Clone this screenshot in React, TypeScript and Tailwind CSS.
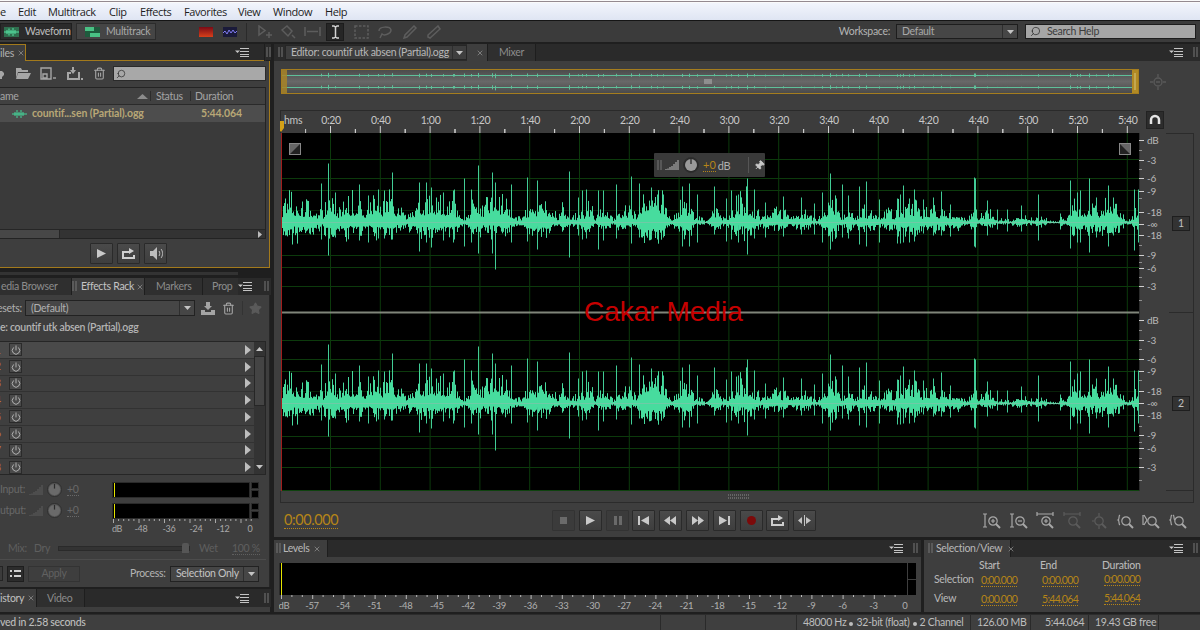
import React from "react";
import { Power, Search, Star, Trash2, Pin, X } from "lucide-react";

// envelope of the clip: [x on page, height of the solid part]
const ENV: number[][] = [[282,18],[290,24],[300,20],[312,18],[318,8],[322,12],[328,22],[340,14],[345,20],[352,20],[356,14],[360,18],[365,12],[372,20],[385,18],[390,22],[400,14],[407,6],[408,16],[415,14],[420,24],[430,22],[445,16],[455,20],[460,8],[463,4],[470,14],[480,20],[490,18],[500,20],[510,14],[517,5],[522,6],[526,14],[535,15],[545,18],[555,10],[558,4],[562,12],[572,5],[580,10],[590,14],[595,6],[600,14],[608,12],[613,4],[620,10],[628,14],[635,6],[640,20],[650,27],[660,25],[668,14],[672,4],[678,12],[682,18],[690,18],[695,4],[700,6],[705,2],[710,8],[716,18],[722,6],[728,8],[735,16],[745,22],[752,18],[760,5],[765,8],[775,10],[785,12],[790,6],[795,8],[802,8],[808,10],[815,3],[825,12],[832,22],[838,12],[842,5],[848,13],[856,6],[862,12],[872,12],[878,6],[885,10],[892,8],[900,16],[908,18],[916,15],[925,10],[935,12],[942,14],[948,5],[952,12],[958,10],[962,5],[968,3],[972,15],[978,4],[985,10],[990,8],[995,4],[1000,3],[1005,3],[1010,2],[1018,8],[1024,8],[1028,3],[1038,4],[1042,6],[1048,2],[1058,1],[1061,8],[1065,2],[1070,14],[1080,18],[1090,14],[1100,14],[1110,18],[1118,14],[1124,4],[1130,2],[1135,10],[1139,8]];

// tall single peaks: [x, up, down]
const PEAKS: number[][] = [[321,39,17],[328,59,33],[335,30,15],[359,38,18],[368,27,20],[378,33,16],[384,32,16],[392,50,17],[419,40,29],[426,40,20],[431,35,25],[443,30,18],[453,32,20],[454,33,17],[464,44,24],[471,33,20],[478,57,31],[492,50,31],[495,40,47],[511,38,20],[527,45,19],[537,42,27],[569,51,35],[578,25,13],[582,32,17],[586,33,16],[598,32,27],[603,32,18],[616,38,16],[631,46,21],[639,39,15],[651,35,17],[657,28,17],[663,28,15],[682,36,24],[689,39,24],[697,28,20],[714,36,12],[726,24,19],[731,32,17],[738,28,20],[747,44,32],[754,33,16],[765,20,15],[783,26,14],[801,25,12],[814,19,12],[822,30,20],[830,49,27],[836,24,15],[842,38,15],[848,27,16],[859,36,22],[866,41,24],[879,23,20],[897,24,21],[900,28,21],[903,37,20],[909,24,20],[914,33,19],[923,23,11],[933,25,13],[941,31,13],[950,18,14],[974,45,24],[975,44,25],[987,22,13],[997,13,7],[1007,13,9],[1021,17,9],[1038,28,18],[1060,9,7],[1070,42,26],[1077,30,20],[1080,32,20],[1089,44,30],[1096,25,15],[1108,37,24],[1113,25,13],[1134,33,28],[1138,33,20]];

function envAt(x: number) {
  for (let i = 0; i < ENV.length - 1; i++) {
    const [a, va] = ENV[i];
    const [b, vb] = ENV[i + 1];
    if (x >= a && x <= b) return va + ((vb - va) * (x - a)) / (b - a);
  }
  return 0;
}

function buildColumns() {
  let seed = 7331;
  const rnd = () => {
    seed = (seed * 16807) % 2147483647;
    return seed / 2147483647;
  };
  const jag = () => {
    const r = rnd();
    if (r < 0.3) return 0.4 + 0.2 * rnd();
    if (r < 0.68) return 0.65 + 0.35 * rnd();
    return 1.1 + 0.6 * rnd();
  };
  const out: number[][] = [];
  for (let x = 282; x < 1139; x++) {
    const slow = 0.8 + 0.2 * Math.sin(x * 0.9 + Math.sin(x * 0.23) * 3);
    const e = envAt(x) * slow * 1.05;
    out.push([x, e * jag(), e * 0.6 * jag()]);
  }
  return out;
}

const COLS = buildColumns();

function Clip({ mid }: { mid: number }) {
  const core = COLS.map(([x, u, d]) => `M${x + 0.5} ${(mid - u).toFixed(1)}V${(mid + d).toFixed(1)}`).join("");
  const peaks = PEAKS.map(([x, u, d]) => `M${x + 0.5} ${mid - u}V${mid + d}`).join("");
  return (
    <g>
      <path d={peaks} stroke="#41cc96" strokeWidth="1" />
      <path d={core} stroke="#47dc9e" strokeWidth="1" />
      <path d={`M282 ${mid}H1139`} stroke="#6fcaa6" strokeWidth="1" />
    </g>
  );
}

function MiniClip({ mid }: { mid: number }) {
  const p = PEAKS.map(([x, u, dn]) => `M${x + 0.5} ${mid - u * 0.045}V${mid + dn * 0.06}`).join("");
  return <path d={`M282 ${mid}H1132` + p} stroke="#5fc09a" strokeWidth="1" />;
}

const HLINES = [159, 178, 190, 210, 234, 255, 267, 286, 340, 359, 371, 391, 415, 436, 448, 467];
const VLINES = Array.from({ length: 17 }, (_, i) => 330.5 + i * 49.8);
const RULER = ["0:20","0:40","1:00","1:20","1:40","2:00","2:20","2:40","3:00","3:20","3:40","4:00","4:20","4:40","5:00","5:20","5:40"];
const DB_SCALE: [string, number][] = [["dB",140],["-3",160],["-6",178],["-9",191],["-18",212],["-∞",224],["-18",235],["-9",255],["-6",268],["-3",286],["dB",320],["-3",340],["-6",359],["-9",371],["-18",391],["-∞",403],["-18",415],["-9",435],["-6",448],["-3",467]];
const LEVELS = ["-57","-54","-51","-48","-45","-42","-39","-36","-33","-30","-27","-24","-21","-18","-15","-12","-9","-6","-3","0"];

function Grip() {
  return (
    <svg width="5" height="11" viewBox="0 0 5 11" className="shrink-0">
      <path d="M0 1h5M0 3h5M0 5h5M0 7h5M0 9h5" stroke="#777" strokeWidth="1" strokeDasharray="2 1" />
    </svg>
  );
}

function PanelMenu() {
  return (
    <svg width="14" height="9" viewBox="0 0 14 9" className="shrink-0">
      <path d="M0 2.500h5L2.500 5z" fill="#c8c8c8" />
      <path d="M5 .5h9M5 3.500h9M5 6.500h9M5 8.500h9" stroke="#c4c4c4" strokeWidth="1" />
    </svg>
  );
}

function TabClose({ className = "" }: { className?: string }) {
  return <X size={8} strokeWidth={2} className={`text-[#9a9a9a] shrink-0 ${className}`} />;
}

function TransportBtn({ children, dim }: { children: React.ReactNode; dim?: boolean }) {
  return (
    <div
      className={`w-[23px] h-[21px] flex items-center justify-center rounded-[1px] border ${
        dim ? "border-[#333] bg-[#3b3b3b]" : "border-[#2a2a2a] bg-gradient-to-b from-[#4a4a4a] to-[#3e3e3e]"
      }`}
    >
      {children}
    </div>
  );
}

function Glyph({ d, fill = "#c9c9c9" }: { d: string; fill?: string }) {
  return (
    <svg width="13" height="11" viewBox="0 0 13 11">
      <path d={d} fill={fill} />
    </svg>
  );
}

function LoopIcon({ color = "#cfcfcf" }: { color?: string }) {
  return (
    <svg width="15" height="13" viewBox="0 0 15 13">
      <path d="M1 4h7V1l5 3-5 3V6H3v4h9V8h2v4H1z" fill={color} />
    </svg>
  );
}

function ZoomIcon({ mark, dim }: { mark: React.ReactNode; dim?: boolean }) {
  const c = dim ? "#5c5c5c" : "#a8a8a8";
  return (
    <svg width="18" height="17" viewBox="0 0 18 17" fill="none" stroke={c} strokeWidth="1.200">
      {mark}
      <circle cx="10" cy="9" r="4.200" />
      <path d="M13 12l4 4" strokeWidth="2" />
    </svg>
  );
}

function Tab({ label, active, width, grip, offset = 0 }: { label: string; active?: boolean; width: number; grip?: boolean; offset?: number }) {
  return (
    <div
      style={{ width }}
      className={`h-full flex items-center gap-[3px] overflow-hidden shrink-0 border-r border-[#1e1e1e] ${
        active ? "bg-[#3e3e3e] text-[#c4c4c4]" : "bg-[#2f2f2f] text-[#8c8c8c]"
      }`}
    >
      {grip && <Grip />}
      <span style={{ marginLeft: offset }} className="whitespace-nowrap pl-[1px]">
        {label}
      </span>
      {active && <TabClose className="-ml-[1px]" />}
    </div>
  );
}

function Gold({ children, className = "" }: { children: React.ReactNode; className?: string }) {
  return <span className={`text-[#b58518] border-b border-dotted border-[#b58518] leading-[12px] tracking-[-0.7px] ${className}`}>{children}</span>;
}

function Bars({ color = "#5c5c5c" }: { color?: string }) {
  return (
    <svg width="14" height="12" viewBox="0 0 14 12">
      <path d="M1 11v-1M3 11V9.500M5 11V8M7 11V7M9 11V5M11 11V3M13 11V1" stroke={color} strokeWidth="1" />
    </svg>
  );
}

function Knob({ size = 15, light }: { size?: number; light?: boolean }) {
  return (
    <svg width={size} height={size} viewBox="0 0 16 16">
      <circle cx="8" cy="8" r="7.500" fill={light ? "#2a2a2a" : "#555"} stroke="#2e2e2e" />
      <circle cx="8" cy="8" r="6" fill={light ? "#9a9a9a" : "#6a6a6a"} />
      <path d="M8 2v5" stroke="#2a2a2a" strokeWidth="1.300" />
    </svg>
  );
}

function Menu() {
  const items = [["e", 0], ["Edit", 18], ["Multitrack", 48], ["Clip", 109], ["Effects", 140], ["Favorites", 184], ["View", 238], ["Window", 273], ["Help", 325]] as [string, number][];
  return (
    <div className="h-[17px] bg-gradient-to-b from-[#f2f5fc] to-[#dfe5f3] flex items-center font-['Open_Sans',sans-serif] text-[11px] tracking-[-0.4px] text-[#1d1d1d]">
      {items.map(([t, x], i) => (
        <span key={t} style={{ width: i < items.length - 1 ? items[i + 1][1] - x : undefined }} className="whitespace-nowrap">
          {t}
        </span>
      ))}
    </div>
  );
}

function ToolIcon({ d, w = 15, stroke = "#5d5d5d", dash }: { d: string; w?: number; stroke?: string; dash?: string }) {
  return (
    <svg width={w} height="14" viewBox={`0 0 ${w} 14`} fill="none" stroke={stroke} strokeWidth="1.500" strokeDasharray={dash}>
      <path d={d} />
    </svg>
  );
}

function Toolbar() {
  return (
    <div className="h-[22px] bg-[#3b3b3b] border-t border-[#151515] flex items-center">
      <div className="w-[72px] h-[17px] bg-[#2b2b2b] border border-[#1f1f1f] flex items-center pl-[3px] gap-[6px] text-[#bdbdbd]">
        <svg width="15" height="10" viewBox="0 0 15 10" className="shrink-0">
          <rect width="15" height="10" fill="#2f6f4f" />
          <path d="M0 5h15M3 3v4M5 1.500v7M7 3v4M9 1v8M11 3v4" stroke="#57e0a2" />
        </svg>
        Waveform
      </div>
      <div className="w-[80px] h-[17px] ml-[4px] bg-[#454545] border border-[#2c2c2c] flex items-center pl-[8px] gap-[6px] text-[#a8a8a8]">
        <svg width="15" height="10" viewBox="0 0 15 10" className="shrink-0">
          <rect width="15" height="10" fill="#1e5b3d" />
          <rect x="0" y="0" width="9" height="4" fill="#49c184" />
          <rect x="5" y="6" width="10" height="4" fill="#49c184" />
        </svg>
        Multitrack
      </div>
      <svg width="14" height="10" viewBox="0 0 14 10" className="ml-[43px]">
        <defs>
          <linearGradient id="sp" x1="0" y1="0" x2="0" y2="1">
            <stop offset="0" stopColor="#7a0a16" />
            <stop offset="1" stopColor="#d8401a" />
          </linearGradient>
        </defs>
        <rect width="14" height="10" fill="url(#sp)" />
      </svg>
      <svg width="14" height="10" viewBox="0 0 14 10" className="ml-[10px]">
        <rect width="14" height="10" fill="#1a1a3a" />
        <path d="M0 6l2-2 2 3 2-4 2 3 2-3 2 3 2-2" stroke="#7f7bf0" fill="none" />
      </svg>
      <div className="w-px h-[18px] bg-[#2a2a2a] ml-[9px]" />
      <div className="flex items-center ml-[11px] gap-[8px]">
        <ToolIcon d="M1 1v9l6-4.500zM11 7v6M8 10h6" />
        <ToolIcon d="M1 5l5-4 5 5-4 5zM11 10l3 3" />
        <ToolIcon w={17} d="M1 2v9M16 2v9M3 6.500h11" />
        <div className="w-[18px] h-[18px] -ml-[3px] bg-[#262626] border border-[#1c1c1c] flex items-center justify-center">
          <ToolIcon w={9} stroke="#d4d4d4" d="M1 1h2l1.500 1L6 1h2M4.500 2v10M1 13h2l1.500-1L6 13h2" />
        </div>
        <div className="ml-[2px]">
          <ToolIcon d="M1 1h13v12H1z" dash="2.500 1.500" />
        </div>
        <ToolIcon d="M2 6c0-5 11-5 12-1 0 4-7 6-9 4l-2 4" />
        <div className="ml-[3px]">
          <ToolIcon d="M1 13l3-1 9-9-2-2-9 9z" />
        </div>
        <ToolIcon w={16} d="M2 12l2 1 10-9-2-3-10 9zM2 12" />
      </div>
      <span className="ml-auto text-[#b4b4b4] mr-[6px]">Workspace:</span>
      <div className="w-[122px] h-[15px] bg-[#464646] border border-[#1d1d1d] flex items-center pl-[5px] text-[#a8a8a8]">
        <span className="flex-1">Default</span>
        <div className="w-[15px] h-full border-l border-[#2e2e2e] flex items-center justify-center">
          <svg width="7" height="4" viewBox="0 0 7 4">
            <path d="M0 0h7L3.500 4z" fill="#c4c4c4" />
          </svg>
        </div>
      </div>
      <div className="w-[171px] h-[15px] ml-[7px] mr-[4px] bg-[#a6a6a6] border border-[#1d1d1d] flex items-center pl-[4px] gap-[6px] text-[#3c3c3c]">
        <Search size={11} strokeWidth={1.500} className="-scale-x-100 text-[#222]" />
        Search Help
      </div>
    </div>
  );
}

function FilesPanel() {
  return (
    <div className="h-[224px] flex flex-col shrink-0">
      <div className="h-[17px] flex bg-[#2a2a2a] items-center">
        <div className="w-[26px] h-full bg-[#3e3e3e] border-t border-r border-[#a37a1c] flex items-center overflow-hidden text-[#b0b0b0]">
          <span className="whitespace-nowrap">iles</span>
          <TabClose className="ml-[3px]" />
        </div>
        <div className="flex-1 h-full border-b border-[#a37a1c] flex items-center justify-end pr-[15px]">
          <PanelMenu />
        </div>
        <div className="w-[2px] h-full border-l border-[#1e1e1e]" />
        <div className="h-full flex items-center border-b border-[#1e1e1e]">
          <Grip />
        </div>
      </div>
      <div className="flex-1 w-[270px] bg-[#3e3e3e] border-r border-b border-[#a37a1c] flex flex-col pr-[3px]">
        <div className="h-[24px] flex items-center pt-[1px] text-[#b0b0b0]">
          <svg width="4" height="10" viewBox="0 0 4 10" className="shrink-0">
            <path d="M0 2h2l2 2v2l-2 2v2H0z" fill="#a6a6a6" />
          </svg>
          <svg width="16" height="13" viewBox="0 0 16 13" className="ml-[11px]">
            <path d="M1 3V1h5l1 2h6v2H3L1 11zM3 6h13l-3 6H1z" fill="#a6a6a6" />
          </svg>
          <svg width="16" height="13" viewBox="0 0 16 13" fill="none" stroke="#a6a6a6" strokeWidth="1.400" className="ml-[9px]">
            <path d="M1 1h10v11H1zM3 7h4v4H3z" />
            <path d="M13 11h3" />
          </svg>
          <svg width="17" height="14" viewBox="0 0 17 14" className="ml-[10px]">
            <path d="M1 5h4v2H3v4h9V5h2v8H1zM6 0h2v3h2L7 7 4 3h2zM15 11h2v2h-2z" fill="#a6a6a6" />
          </svg>
          <Trash2 size={13} className="ml-[10px] text-[#a6a6a6]" />
          <div className="w-[153px] h-[15px] ml-[7px] bg-[#a8a8a8] border border-[#2a2a2a] flex items-center pl-[2px]">
            <Search size={10} strokeWidth={1.600} className="-scale-x-100 text-[#222]" />
          </div>
        </div>
        <div className="flex-1 mt-[2px] bg-[#3a3a3a] border border-l-0 border-[#232323] flex flex-col">
          <div className="h-[17px] bg-[#414141] border-b border-[#2a2a2a] flex items-center text-[#a4a4a4]">
            <span className="w-[137px]">ame</span>
            <svg width="11" height="5" viewBox="0 0 11 5">
              <path d="M5.500 0L11 5H0z" fill="#8c8c8c" />
            </svg>
            <span className="w-[37px] pl-[5px] ml-[2px] border-l border-[#2c2c2c]">Status</span>
            <span className="pl-[4px] ml-[3px] border-l border-[#2c2c2c]">Duration</span>
          </div>
          <div className="h-[17px] bg-[#4d4d4d] flex items-center pl-[12px] text-[#b8a776] font-bold tracking-[-0.1px]">
            <svg width="15" height="8" viewBox="0 0 15 8">
              <path d="M0 4h15M3 2v4M5 0v8M7 2v4M9 0v8M11 2v4" stroke="#45d59a" />
            </svg>
            <span className="ml-[5px] w-[169px]">countif...sen (Partial).ogg</span>
            <span>5:44.064</span>
          </div>
          <div className="flex-1" />
          <div className="h-[9px] flex bg-[#333] border-t border-[#262626]">
            <div className="w-[60px] bg-[#474747] border-r border-[#262626]" />
            <div className="flex-1 flex items-center justify-end pr-[3px]">
              <svg width="4" height="7" viewBox="0 0 4 7">
                <path d="M0 0l4 3.500L0 7z" fill="#bbb" />
              </svg>
            </div>
          </div>
        </div>
        <div className="h-[28px] flex items-center justify-center gap-[4px] pr-[3px] -ml-[6px]">
          <TransportBtn>
            <Glyph d="M2 1l9 4.500L2 10z" />
          </TransportBtn>
          <TransportBtn>
            <LoopIcon />
          </TransportBtn>
          <TransportBtn>
            <svg width="17" height="13" viewBox="0 0 17 13">
              <path d="M3 4h3l4-4v13l-4-4H3z" fill="#bdbdbd" />
              <path d="M12 4c1 1 1 4 0 5M14 2c2 2 2 7 0 9" stroke="#bdbdbd" fill="none" />
            </svg>
          </TransportBtn>
        </div>
      </div>
    </div>
  );
}

function RackRow({ n, first }: { n: number; first?: boolean }) {
  return (
    <div className={`h-[16.750px] flex items-center border-b border-[#323232] ${first ? "bg-[#4a4a4a]" : "bg-[#3f3f3f]"}`}>
      <span className="w-[9px] -ml-[5px] text-[#b8743a] overflow-hidden">{n}</span>
      <div className="ml-[5px] w-[13px] h-[13px] border border-[#2a2a2a] bg-[#4a4a4a] flex items-center justify-center">
        <Power size={10} strokeWidth={2} className="text-[#c4c4c4]" />
      </div>
      <div className="flex-1" />
      <svg width="7" height="10" viewBox="0 0 7 10" className="mr-[3px]">
        <path d="M1 0l6 5-6 5z" fill="#bdbdbd" />
      </svg>
    </div>
  );
}

function Meter() {
  return (
    <div className="flex h-[16px] w-[147px] gap-[1px] shrink-0">
      <div className="w-[138px] bg-black border border-[#2a2a2a] flex items-stretch pl-[1px]">
        <div className="w-[1px] bg-[#e4e400]" />
      </div>
      <div className="flex-1 flex flex-col gap-[1px]">
        <div className="flex-1 bg-black border border-[#2c2c2c]" />
        <div className="flex-1 bg-black border border-[#2c2c2c]" />
      </div>
    </div>
  );
}

function FxRow({ label }: { label: string }) {
  return (
    <div className="h-[21px] flex items-center text-[#686868]">
      <span className="w-[29px] whitespace-nowrap">{label}</span>
      <Bars />
      <div className="ml-[4px]">
        <Knob />
      </div>
      <span className="ml-[5px] w-[45px] border-b-0">
        <span className="border-b border-dotted border-[#686868]">+0</span>
      </span>
      <Meter />
    </div>
  );
}

function EffectsPanel() {
  return (
    <div className="h-[309px] flex flex-col shrink-0">
      <div className="h-[17px] flex bg-[#2a2a2a] items-center">
        <Tab label="edia Browser" width={72} />
        <Tab label="Effects Rack" width={73} active grip />
        <Tab label="Markers" width={58} offset={10} />
        <div className="w-[35px] h-full bg-[#2f2f2f] overflow-hidden text-[#8c8c8c] pl-[9px] flex items-center">Prop</div>
        <PanelMenu />
        <div className="flex-1 flex justify-end pr-[2px]">
          <Grip />
        </div>
      </div>
      <div className="flex-1 w-[270px] bg-[#3e3e3e] border-r border-[#262626] pr-[3px] flex flex-col">
        <div className="flex items-center h-[16px] mt-[5px] text-[#b0b0b0]">
          <span className="w-[25px] -ml-[3px] mr-[3px] whitespace-nowrap">esets:</span>
          <div className="w-[170px] h-[16px] bg-[#464646] border border-[#222] flex items-center pl-[5px]">
            <span className="flex-1">(Default)</span>
            <div className="w-[15px] border-l border-[#2e2e2e] h-full flex items-center justify-center">
              <svg width="7" height="4" viewBox="0 0 7 4">
                <path d="M0 0h7L3.500 4z" fill="#c4c4c4" />
              </svg>
            </div>
          </div>
          <svg width="14" height="13" viewBox="0 0 14 13" className="ml-[6px]">
            <path d="M0 8h4v2h6V8h4v5H0zM5 0h4v4h2L7 8 3 4h2z" fill="#a4a4a4" />
          </svg>
          <Trash2 size={13} className="ml-[7px] text-[#a4a4a4]" />
          <div className="w-px h-[14px] bg-[#333] ml-[7px]" />
          <Star size={13} className="ml-[6px] text-[#5a5a5a] fill-[#5a5a5a]" />
        </div>
        <div className="h-[14px] mt-[6px] text-[#b4b4b4] font-semibold whitespace-nowrap">e: countif utk absen (Partial).ogg</div>
        <div className="mt-[5px] flex border border-l-0 border-[#262626] h-[134px]">
          <div className="flex-1 overflow-hidden">
            {[1, 2, 3, 4, 5, 6, 7, 8].map((n) => (
              <RackRow key={n} n={n} first={n === 1} />
            ))}
          </div>
          <div className="w-[11px] bg-[#333] flex flex-col items-center">
            <div className="h-[14px] w-full flex items-center justify-center">
              <svg width="7" height="4" viewBox="0 0 7 4">
                <path d="M0 4h7L3.500 0z" fill="#c4c4c4" />
              </svg>
            </div>
            <div className="h-[50px] w-full bg-[#444] border border-[#262626]" />
            <div className="flex-1" />
            <div className="h-[14px] w-full flex items-center justify-center">
              <svg width="7" height="4" viewBox="0 0 7 4">
                <path d="M0 0h7L3.500 4z" fill="#c4c4c4" />
              </svg>
            </div>
          </div>
        </div>
        <div className="mt-[4px]">
          <FxRow label="Input:" />
          <FxRow label="utput:" />
        </div>
        <svg width="166" height="15" viewBox="105 519 166 15" className="ml-[105px] -mt-[2px] shrink-0">
          {Array.from({ length: 28 }, (_, i) => (
            <path key={i} d={`M${113.500 + i * 5.100} 519v${i % 5 === 0 ? 4 : 2}`} stroke="#aaa" />
          ))}
          {([["dB", 117], ["-48", 141], ["-36", 169], ["-24", 196], ["-12", 223], ["0", 250]] as [string, number][]).map(([t, x]) => (
            <text key={t} x={x} y="532" textAnchor="middle" fontSize="9" fill="#a8a8a8">
              {t}
            </text>
          ))}
        </svg>
        <div className="h-[14px] mt-[7px] flex items-center text-[#5f5f5f]">
          <span className="w-[34px] pl-[8px]">Mix:</span>
          <span className="w-[24px]">Dry</span>
          <div className="w-[132px] h-[5px] bg-[#333] border border-[#2a2a2a] flex justify-end items-center">
            <div className="w-[7px] h-[10px] bg-[#565656] rounded-t-[2px]" />
          </div>
          <span className="ml-[9px] w-[33px]">Wet</span>
          <span className="border-b border-dotted border-[#5f5f5f] leading-[12px]">100 %</span>
        </div>
        <div className="h-px bg-[#4c4c4c] mt-[4px]" />
        <div className="flex items-center h-[17px] mt-[5px] text-[#b4b4b4]">
          <div className="w-[3px] h-[15px] bg-[#3b3b3b] border-r border-y border-[#242424]" />
          <div className="ml-[4px] w-[17px] h-[16px] bg-[#2c2c2c] border border-[#1e1e1e] flex items-center justify-center">
            <svg width="11" height="8" viewBox="0 0 11 8">
              <path d="M0 1h2M0 6h2M4 1h7M4 6h7" stroke="#d0d0d0" strokeWidth="2" />
            </svg>
          </div>
          <div className="ml-[4px] w-[52px] h-[16px] border border-[#333] flex items-center justify-center text-[#616161]">Apply</div>
          <span className="ml-[50px] w-[40px]">Process:</span>
          <div className="w-[89px] h-[16px] bg-[#464646] border border-[#222] flex items-center pl-[5px] text-[#c4c4c4]">
            <span className="flex-1 whitespace-nowrap">Selection Only</span>
            <div className="w-[15px] border-l border-[#2e2e2e] h-full flex items-center justify-center">
              <svg width="7" height="4" viewBox="0 0 7 4">
                <path d="M0 0h7L3.500 4z" fill="#c4c4c4" />
              </svg>
            </div>
          </div>
        </div>
      </div>
    </div>
  );
}

function HistoryPanel() {
  return (
    <div className="h-[23px] flex flex-col shrink-0">
      <div className="h-[18px] flex bg-[#2a2a2a] items-center">
        <div className="w-[37px] h-full bg-[#3e3e3e] border-r border-[#1e1e1e] flex items-center text-[#c0c0c0]">
          istory
          <TabClose className="ml-[3px]" />
        </div>
        <div className="w-[48px] h-full bg-[#2f2f2f] border-r border-[#1e1e1e] flex items-center pl-[10px] text-[#8c8c8c]">Video</div>
        <div className="flex-1 flex justify-end pr-[15px]">
          <PanelMenu />
        </div>
        <Grip />
        <div className="w-[2px]" />
      </div>
      <div className="flex-1 bg-[#3e3e3e] w-[270px]" />
    </div>
  );
}

function Editor() {
  return (
    <div className="h-[493px] flex flex-col shrink-0 bg-[#3e3e3e]">
      <div className="h-[17px] flex bg-[#2a2a2a] items-center pl-[4px]">
        <Grip />
        <div className="ml-[2px] w-[182px] h-[15px] bg-[#3e3e3e] border border-[#262626] flex items-center pl-[5px] text-[#b8b8b8]">
          <span className="flex-1 whitespace-nowrap">Editor: countif utk absen (Partial).ogg</span>
          <div className="w-[14px] border-l border-[#2e2e2e] h-full flex items-center justify-center">
            <svg width="7" height="4" viewBox="0 0 7 4">
              <path d="M0 0h7L3.500 4z" fill="#c4c4c4" />
            </svg>
          </div>
        </div>
        <div className="w-[21px] h-full bg-[#3e3e3e] border-r border-[#1e1e1e] flex items-center justify-center pl-[5px]">
          <TabClose />
        </div>
        <div className="w-[48px] h-full bg-[#2f2f2f] border-r border-[#1e1e1e] flex items-center justify-center text-[#8c8c8c]">Mixer</div>
        <div className="flex-1 flex justify-end pr-[10px]">
          <PanelMenu />
        </div>
        <Grip />
        <div className="w-[2px]" />
      </div>
      <div className="flex items-center pl-[7px] mt-[8px] h-[25px]">
        <div className="w-[858px] h-[25px] border border-[#a57d1e] relative overflow-hidden">
          <svg width="856" height="23" viewBox="282 70 856 23" className="block">
            <defs>
              <linearGradient id="ov" x1="0" y1="0" x2="0" y2="1">
                <stop offset="0" stopColor="#4b4b4b" />
                <stop offset=".5" stopColor="#686868" />
                <stop offset="1" stopColor="#4a4a4a" />
              </linearGradient>
            </defs>
            <rect x="282" y="70" width="856" height="23" fill="url(#ov)" />
            <MiniClip mid={75.500} />
            <MiniClip mid={87.500} />
            <rect x="282" y="70" width="5" height="23" fill="#a88427" opacity=".85" />
            <rect x="1132" y="70" width="6" height="23" fill="#b18a24" />
            <path d="M1135 73v17" stroke="#d8c47c" />
            <path d="M705 79v5M707 79v5M709 79v5M711 79v5" stroke="#b8b8b8" />
          </svg>
        </div>
        <svg width="16" height="16" viewBox="0 0 16 16" className="ml-[11px]" fill="none" stroke="#5a5a5a" strokeWidth="1.300">
          <circle cx="8" cy="8" r="4" />
          <path d="M6 8h4M8 0v3M8 13v3M0 8h3M13 8h3" />
        </svg>
      </div>
      <div className="flex mt-[16px] pl-[6px] h-[23px]">
        <svg width="860" height="23" viewBox="280 110 860 23" className="bg-[#3c3c3c] block shrink-0">
          <path d="M280 110.500H1140M280.500 110V133" stroke="#2a2a2a" />
          <text x="284" y="124" fontSize="10.500" fill="#c4c4c4">
            hms
          </text>
          {RULER.map((t, i) => (
            <text key={t} x={331 + i * 49.800} y="124" textAnchor="middle" fontSize="10.500" fill="#c8c8c8">
              {t}
            </text>
          ))}
          {VLINES.map((x) => (
            <path key={x} d={`M${x} 126v7M${x + 24.900} 129v4M${x - 24.900} 129v4`} stroke="#cfcfcf" />
          ))}
          <path d="M281 120h6v7l-3 4-3-4z" transform="translate(-3 1)" fill="#d4a017" />
        </svg>
        <div className="ml-[6px] w-[18px] h-[18px] mt-[1px] bg-[#2c2c2c] border border-[#222] flex items-center justify-center">
          <svg width="12" height="12" viewBox="0 0 12 12" fill="none">
            <path d="M2 10V6a4 4 0 018 0v4" stroke="#e4e4e4" strokeWidth="2.500" />
          </svg>
        </div>
      </div>
      <div className="flex pl-[7px] h-[358px] relative">
        <svg width="858" height="358" viewBox="281 133 858 358" className="bg-black block shrink-0">
          {HLINES.map((y) => (
            <path key={y} d={`M281 ${y + 0.5}H1139`} stroke={y === 210 || y === 234 || y === 391 || y === 415 ? "#082108" : "#0c3a0c"} />
          ))}
          {VLINES.map((x) => (
            <path key={x} d={`M${x} 133V491`} stroke="#0c3a0c" />
          ))}
          <path d="M281 490.500H1139" stroke="#0e420e" />
          <Clip mid={222.500} />
          <Clip mid={403.500} />
          <path d="M281 312.500H1139" stroke="#80857a" strokeWidth="2" />
          <path d="M281.500 133V491" stroke="#a01c1c" />
        </svg>
        <svg width="27" height="358" viewBox="1139 133 27 358" className="shrink-0">
          <path d="M1139.500 133V491" stroke="#2b2b2b" />
          {DB_SCALE.map(([t, y], i) => (
            <g key={i}>
              <path d={`M1139 ${y + 0.5}h5`} stroke="#cfcfcf" />
              <text x="1147" y={y + 4} fontSize="10" fill="#b8b8b8">
                {t}
              </text>
            </g>
          ))}
          {[150, 169, 198, 245, 262, 277, 300, 330, 349, 380, 426, 442, 458, 480].map((y) => (
            <path key={y} d={`M1139 ${y + 0.5}h3`} stroke="#8d8d8d" />
          ))}
        </svg>
        <div className="flex-1 flex flex-col border-y border-r border-[#2b2b2b] mr-[6px] pl-[3px]">
          <div className="h-[179px] flex items-center justify-center border-b border-[#2b2b2b]">
            <div className="w-[18px] h-[15px] bg-[#333] border border-[#1e1e1e] flex items-center justify-center text-[#c0c0c0]">1</div>
          </div>
          <div className="flex-1 flex items-center justify-center pt-[4px]">
            <div className="w-[18px] h-[15px] bg-[#333] border border-[#1e1e1e] flex items-center justify-center text-[#c0c0c0]">2</div>
          </div>
        </div>
        {/* things floating on the clip */}
        <div className="absolute left-[15px] top-[10px] w-[12px] h-[12px] bg-[#666] border border-[#888]">
          <svg width="10" height="10" viewBox="0 0 10 10">
            <path d="M0 10L10 0v10z" fill="#222" />
          </svg>
        </div>
        <div className="absolute left-[845px] top-[10px] w-[12px] h-[12px] bg-[#666] border border-[#888]">
          <svg width="10" height="10" viewBox="0 0 10 10">
            <path d="M0 0l10 10H0z" fill="#222" />
          </svg>
        </div>
        <div className="absolute left-[380px] top-[20px] w-[111px] h-[24px] bg-[#393939] rounded-[1px] flex items-center pl-[3px] text-[#b0b0b0]">
          <Grip />
          <div className="ml-[3px]">
            <Bars color="#bdbdbd" />
          </div>
          <div className="ml-[4px]">
            <Knob size={16} light />
          </div>
          <Gold className="ml-[4px] text-[11px] tracking-normal">+0</Gold>
          <span className="ml-[2px] text-[11px]">dB</span>
          <div className="w-px h-[16px] bg-[#555] ml-[18px]" />
          <Pin size={11} className="ml-[5px] rotate-45 text-[#c8c8c8] fill-[#c8c8c8]" />
        </div>
        <div className="absolute left-[310px] top-[163px] font-['Liberation_Sans',sans-serif] tracking-normal text-[28px] leading-[32px] text-[#c60000] whitespace-nowrap">Cakar Media</div>
      </div>
      <div className="h-[12px] ml-[6px] mr-[6px] border-b border-x border-[#2b2b2b] flex items-center pl-[447px]">
        <svg width="22" height="5" viewBox="0 0 22 5">
          <path d="M0 1h22M0 4h22" stroke="#8c8c8c" strokeDasharray="1 1" />
        </svg>
      </div>
      <div className="flex-1 flex items-center">
        <span className="ml-[10px] w-[268px] text-[14.500px] tracking-[-0.4px] leading-[18px] text-[#b58518]">
          <span className="border-b border-dotted border-[#b58518]">0:00.000</span>
        </span>
        <div className="flex gap-[3.800px]">
          <TransportBtn dim>
            <Glyph d="M3 2h7v7H3z" fill="#6a6a6a" />
          </TransportBtn>
          <TransportBtn>
            <Glyph d="M2 1l9 4.500L2 10z" />
          </TransportBtn>
          <TransportBtn dim>
            <Glyph d="M3 1h3v9H3zM8 1h3v9H8z" fill="#6a6a6a" />
          </TransportBtn>
          <TransportBtn>
            <Glyph d="M1 1h2v9H1zM12 1v9L4 5.500z" />
          </TransportBtn>
          <TransportBtn>
            <Glyph d="M6 1v9L0 5.500zM12 1v9L6 5.500z" />
          </TransportBtn>
          <TransportBtn>
            <Glyph d="M1 1v9l6-4.500zM7 1v9l6-4.500z" />
          </TransportBtn>
          <TransportBtn>
            <Glyph d="M1 1v9l8-4.500zM10 1h2v9h-2z" />
          </TransportBtn>
          <TransportBtn>
            <svg width="11" height="11" viewBox="0 0 11 11">
              <circle cx="5.500" cy="5.500" r="4.500" fill="#7c0a0a" />
            </svg>
          </TransportBtn>
          <TransportBtn>
            <LoopIcon />
          </TransportBtn>
          <TransportBtn>
            <svg width="15" height="11" viewBox="0 0 15 11" fill="#c4c4c4">
              <path d="M5 2v7L1 5.500zM7 0h1v11H7zM9 2l5 3.500L9 9z" />
            </svg>
          </TransportBtn>
        </div>
        <div className="flex ml-[167px] gap-[8.500px]">
          <ZoomIcon mark={<><path d="M2 2v13M0 2h4M0 15h4" /><path d="M8 9h4M10 7v4" /></>} />
          <ZoomIcon mark={<><path d="M2 2v13M0 2h4M0 15h4" /><path d="M8 9h4" /></>} />
          <ZoomIcon mark={<><path d="M1 2h16M1 0v4M17 0v4" /><path d="M8 9h4M10 7v4" /></>} />
          <ZoomIcon dim mark={<path d="M1 2h16M1 0v4M17 0v4" />} />
          <ZoomIcon dim mark={<path d="M10 1v3M10 14v3M3 9h2" />} />
          <ZoomIcon mark={<path d="M4 3c-2 1 0 4-2 5 2 1 0 4 2 5" />} />
          <ZoomIcon mark={<path d="M1 3v10M2 3l3 5-3 5" />} />
          <ZoomIcon mark={<path d="M3 3c-2 1 0 4-2 5 2 1 0 4 2 5M4 3c2 1 0 4 2 5" />} />
        </div>
      </div>
    </div>
  );
}

function Levels() {
  return (
    <div className="flex-1 flex flex-col bg-[#3e3e3e]">
      <div className="h-[17px] flex bg-[#2a2a2a] items-center">
        <div className="w-[54px] h-full bg-[#3e3e3e] border-r border-[#1e1e1e] flex items-center gap-[2px] pl-[2px] text-[#b8b8b8]">
          <Grip />
          Levels
          <TabClose className="ml-[2px]" />
        </div>
        <div className="flex-1 flex justify-end pr-[10px]">
          <PanelMenu />
        </div>
        <Grip />
        <div className="w-[3px]" />
      </div>
      <div className="flex pl-[5px] pt-[6px] gap-[1px]">
        <div className="w-[628px] h-[32px] bg-black border-l border-[#2a2a2a] pl-[1px]">
          <div className="w-[1px] h-full bg-[#e6e600]" />
        </div>
        <div className="w-[8px] flex flex-col gap-[1px] h-[32px]">
          <div className="flex-1 bg-black" />
          <div className="flex-1 bg-black" />
        </div>
      </div>
      <svg width="640" height="17" viewBox="279 595 640 17" className="ml-[5px] block">
        {Array.from({ length: 60 }, (_, i) => (
          <path key={i} d={`M${281.500 + i * 10.400} 595v${i % 3 === 0 ? 4 : 2}`} stroke="#bbb" />
        ))}
        <text x="284" y="609" textAnchor="middle" fontSize="9.500" fill="#b0b0b0">
          dB
        </text>
        {LEVELS.map((t, i) => (
          <text key={t} x={312 + i * 31.200} y="609" textAnchor="middle" fontSize="9.500" fill="#b0b0b0">
            {t}
          </text>
        ))}
      </svg>
    </div>
  );
}

function SelectionView() {
  const rows = [
    ["Selection", "0:00.000", "0:00.000", "0:00.000"],
    ["View", "0:00.000", "5:44.064", "5:44.064"],
  ];
  return (
    <div className="w-[276px] flex flex-col bg-[#3e3e3e] text-[#b8b8b8]">
      <div className="h-[17px] flex bg-[#2a2a2a] items-center shrink-0">
        <div className="w-[87px] h-full bg-[#3e3e3e] border-r border-[#1e1e1e] flex items-center gap-[3px] pl-[4px] whitespace-nowrap">
          <Grip />
          Selection/View
          <TabClose className="ml-[2px]" />
        </div>
        <div className="flex-1 flex justify-end pr-[10px]">
          <PanelMenu />
        </div>
        <Grip />
        <div className="w-[2px]" />
      </div>
      <div className="pl-[10px]">
        <div className="flex h-[13px] items-end font-medium">
          <span className="w-[45px]" />
          <span className="w-[61px]">Start</span>
          <span className="w-[62px]">End</span>
          <span>Duration</span>
        </div>
        {rows.map((r) => (
          <div key={r[0]} className="flex h-[19px] items-center">
            <span className="w-[47px]">{r[0]}</span>
            <span className="w-[61px]">
              <Gold>{r[1]}</Gold>
            </span>
            <span className="w-[62px]">
              <Gold>{r[2]}</Gold>
            </span>
            <Gold>{r[3]}</Gold>
          </div>
        ))}
      </div>
    </div>
  );
}

function Dot() {
  return <span className="inline-block w-[4px] h-[4px] rounded-full bg-[#bdbdbd] mx-[3px] align-middle" />;
}

function StatusBar() {
  return (
    <div className="h-[16px] mt-[2px] bg-[#3f3f3f] border-t border-[#2c2c2c] flex items-center text-[#bdbdbd]">
      <span className="w-[660px] font-medium whitespace-nowrap">ved in 2.58 seconds</span>
      <div className="w-px h-full bg-[#2a2a2a]" />
      <div className="w-[44px]" />
      <div className="w-px h-full bg-[#2a2a2a]" />
      <div className="w-[90px]" />
      <div className="w-px h-full bg-[#2a2a2a]" />
      <span className="w-[173px] pl-[6px] whitespace-nowrap">
        48000 Hz
        <Dot />
        32-bit (float)
        <Dot />2 Channel
      </span>
      <div className="w-px h-full bg-[#2a2a2a]" />
      <span className="w-[59px] pl-[6px] whitespace-nowrap">126.00 MB</span>
      <div className="w-px h-full bg-[#2a2a2a]" />
      <span className="w-[57px] pl-[14px]">5:44.064</span>
      <div className="w-px h-full bg-[#2a2a2a]" />
      <span className="w-[69px] pl-[6px] whitespace-nowrap">19.43 GB free</span>
      <div className="w-px h-full bg-[#2a2a2a]" />
    </div>
  );
}

export default function App() {
  return (
    <div className="w-[1200px] h-[630px] overflow-hidden bg-[#1f1f1f] flex flex-col font-['Lato',sans-serif] text-[10.500px] tracking-[-0.3px] leading-none">
      <div className="h-[1px] bg-[#fafafa]" />
      <div className="h-[1px] bg-[#948a90]" />
      <div className="h-[1px] bg-[#fafafa]" />
      <Menu />
      <Toolbar />
      <div className="flex gap-[3px] mt-[2px] h-[568px]">
        <div className="w-[271px] flex flex-col shrink-0">
          <FilesPanel />
          <div className="h-[10px] flex items-center">
            <div className="w-[238px] h-[3px] bg-[#333]" />
          </div>
          <EffectsPanel />
          <div className="h-[2px]" />
          <HistoryPanel />
        </div>
        <div className="flex-1 flex flex-col min-w-0">
          <Editor />
          <div className="flex gap-[3px] mt-[3px] flex-1 min-h-0">
            <Levels />
            <SelectionView />
          </div>
        </div>
      </div>
      <StatusBar />
    </div>
  );
}
